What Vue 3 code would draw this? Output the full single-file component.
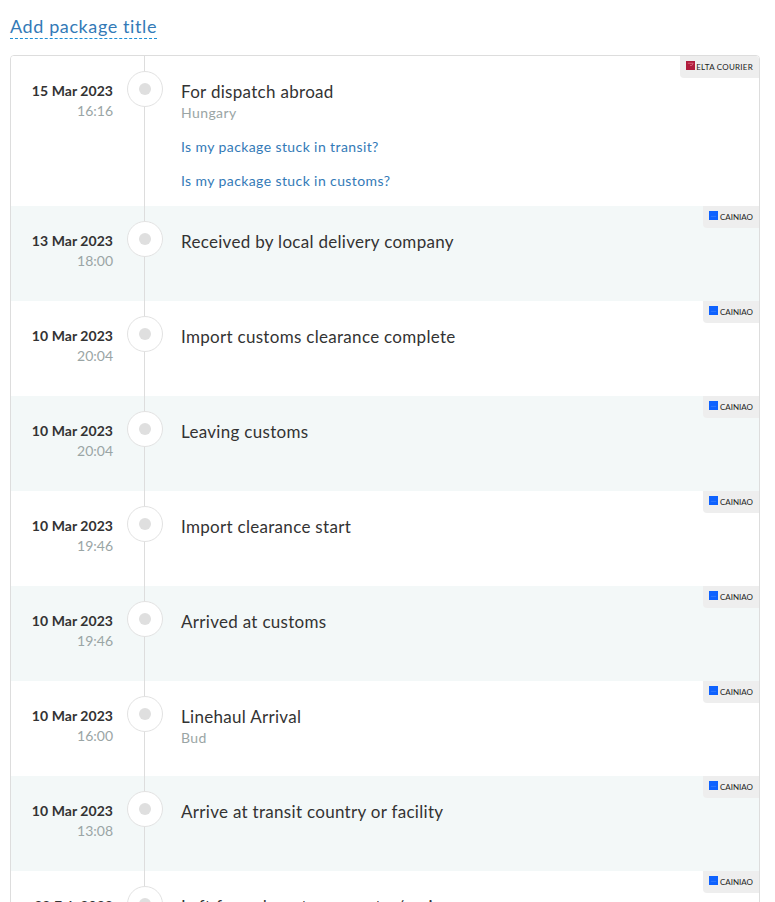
<script setup>
const events = [
  { date: '15 Mar 2023', time: '16:16', title: 'For dispatch abroad', sub: 'Hungary', carrier: 'ELTA COURIER', elta: true, links: ['Is my package stuck in transit?', 'Is my package stuck in customs?'] },
  { date: '13 Mar 2023', time: '18:00', title: 'Received by local delivery company', carrier: 'CAINIAO' },
  { date: '10 Mar 2023', time: '20:04', title: 'Import customs clearance complete', carrier: 'CAINIAO' },
  { date: '10 Mar 2023', time: '20:04', title: 'Leaving customs', carrier: 'CAINIAO' },
  { date: '10 Mar 2023', time: '19:46', title: 'Import clearance start', carrier: 'CAINIAO' },
  { date: '10 Mar 2023', time: '19:46', title: 'Arrived at customs', carrier: 'CAINIAO' },
  { date: '10 Mar 2023', time: '16:00', title: 'Linehaul Arrival', sub: 'Bud', carrier: 'CAINIAO' },
  { date: '10 Mar 2023', time: '13:08', title: 'Arrive at transit country or facility', carrier: 'CAINIAO' },
  { date: '28 Feb 2023', time: '23:10', title: 'Left from departure country/region', carrier: 'CAINIAO' }
]
</script>

<template>
  <div class="page">
    <a class="add-title">Add package title</a>
    <div class="card">
      <div v-for="(e, i) in events" :key="i" class="row" :class="{ first: i === 0 }">
        <div class="when">
          <div class="date">{{ e.date }}</div>
          <div class="time">{{ e.time }}</div>
        </div>
        <div class="rail">
          <span class="dot"><span class="dot-in"></span></span>
        </div>
        <div class="what">
          <div class="title">{{ e.title }}</div>
          <div v-if="e.sub" class="sub">{{ e.sub }}</div>
          <a v-for="l in e.links" :key="l" class="help">{{ l }}</a>
        </div>
        <div class="badge" :class="{ elta: e.elta }">
          <svg v-if="e.elta" class="logo" viewBox="0 0 10 10"><rect width="10" height="10" fill="#b01c3c"/><path d="M2 2.5h6L6.5 5H4.5" fill="none" stroke="#d9667c" stroke-width="1"/></svg>
          <svg v-else class="logo" viewBox="0 0 10 10"><rect width="10" height="10" fill="#0f62fe"/><path d="M2 6h6" stroke="#4d8cff" stroke-width=".6"/></svg>
          <span>{{ e.carrier }}</span>
        </div>
      </div>
    </div>
  </div>
</template>

<style scoped>
.page {
  box-sizing: border-box;
  height: 902px;
  overflow: hidden;
  padding: 15px 15px 0 10px;
  font-family: "Lato", "Open Sans", sans-serif;
  color: #333;
  background: #fff;
}
.add-title {
  display: inline-block;
  font-size: 18px;
  line-height: 23px;
  letter-spacing: 0.6px;
  color: #337ab7;
  border-bottom: 1px dashed #1e8fd5;
}
.card {
  margin-top: 16px;
  border: 1px solid #ddd;
  border-radius: 4px;
  overflow: hidden;
}
.row {
  position: relative;
  display: flex;
  height: 95px;
  background: #fff;
}
.row:nth-child(even) { background: #f3f8f8; }
.row.first { height: 150px; }
.when {
  box-sizing: border-box;
  width: 102px;
  padding-top: 26px;
  text-align: right;
  flex: none;
}
.date {
  font-size: 14px;
  line-height: 18px;
  font-weight: 700;
  letter-spacing: 0.05px;
  color: #333;
}
.time {
  font-size: 14px;
  line-height: 20px;
  margin-top: 1px;
  color: #9aa5a5;
}
.rail {
  position: relative;
  width: 68px;
  flex: none;
}
.rail::before {
  content: "";
  position: absolute;
  left: 31px;
  top: 0;
  bottom: 0;
  width: 1px;
  background: #ddd;
}
.dot {
  position: absolute;
  left: 14px;
  top: 15px;
  box-sizing: border-box;
  width: 36px;
  height: 36px;
  border: 1px solid #e2e2e2;
  border-radius: 50%;
  background: #fff;
  display: flex;
  align-items: center;
  justify-content: center;
}
.dot-in {
  width: 12px;
  height: 12px;
  margin-top: -1px;
  border-radius: 50%;
  background: #dfdfdf;
}
.what {
  padding-top: 24px;
  flex: 1;
  min-width: 0;
}
.title {
  font-size: 17px;
  line-height: 24px;
  letter-spacing: 0.3px;
  color: #333;
}
.sub {
  font-size: 14px;
  line-height: 18px;
  letter-spacing: 0.4px;
  color: #9aa5a5;
}
.help {
  display: block;
  margin-top: 15px;
  font-size: 14px;
  line-height: 19px;
  letter-spacing: 0.4px;
  color: #337ab7;
}
.badge {
  position: absolute;
  top: 0;
  right: 0;
  height: 22px;
  padding: 0 6px;
  display: flex;
  align-items: center;
  gap: 2px;
  background: #eee;
  border-bottom-left-radius: 4px;
  font-size: 8px;
  color: #222;
}
.badge.elta { gap: 1px; }
.badge.elta span { letter-spacing: 0.25px; }
.logo {
  width: 9px;
  height: 9px;
  margin-top: -3px;
}
</style>
